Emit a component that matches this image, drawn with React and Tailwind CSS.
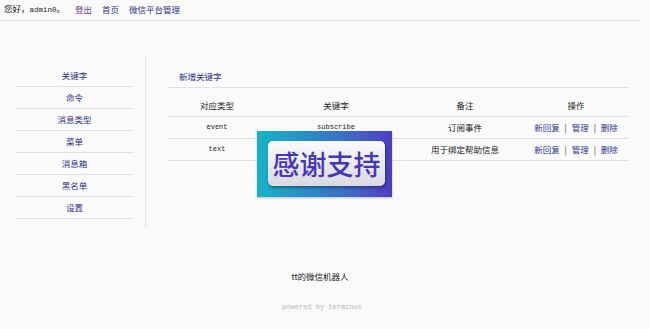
import React from "react";

const menu = ["关键字", "命令", "消息类型", "菜单", "消息箱", "黑名单", "设置"];

const rows = [
  { type: "event", keyword: "subscribe", note: "订阅事件" },
  { type: "text", keyword: "", note: "用于绑定帮助信息" },
];

const cjk = "font-['Noto_Sans_CJK_SC',sans-serif]";
const mono = "font-['Liberation_Mono','Noto_Sans_CJK_SC',monospace]";

const Actions = () => (
  <span className="text-[#2e3590]">
    新回复 <span className="mx-[3px] text-[#333]">|</span> 管理{" "}
    <span className="mx-[3px] text-[#333]">|</span> 删除
  </span>
);

export default function App() {
  return (
    <div className={`relative w-[650px] h-[329px] bg-[#fafafa] text-[#222] ${cjk} overflow-hidden`}>
      {/* top bar */}
      <div className="w-[640px] h-[21px] border-b border-[#e2e2e2] pl-[4px] pt-[2px] flex items-center gap-[10px] text-[8.5px] leading-[12px] pb-[4px]">
        <span>
          您好，<span className={`${mono} text-[7.5px]`}>admin0</span>。
        </span>
        <span className="text-[#6a3a8e]">登出</span>
        <span className="text-[#2e3590]">首页</span>
        <span className="text-[#2e3590]">微信平台管理</span>
      </div>

      {/* main */}
      <div className="flex mt-[36px]">
        <div className="w-[146px] pl-[15px] pr-[11px] pt-[8px] border-r border-[#e4e4e4] h-[171px]">
          {menu.map((m) => (
            <div
              key={m}
              className="h-[22px] border-b border-[#e2e2e2] flex items-center justify-center text-[8.5px] text-[#2a2f8c]"
            >
              {m}
            </div>
          ))}
        </div>

        <div className="pl-[21px] pt-[8px] w-[482px]">
          <div className="h-[23px] border-b border-[#e2e2e2] pl-[12px] flex items-center text-[8.5px] text-[#2a2f8c]">
            新增关键字
          </div>
          <div className="mt-[7px] text-[8.5px]">
            <div className="grid grid-cols-[100px_138px_120px_102px] h-[22px] items-center text-center border-b border-[#e2e2e2]">
              <span>对应类型</span>
              <span>关键字</span>
              <span>备注</span>
              <span>操作</span>
            </div>
            {rows.map((r) => (
              <div
                key={r.type}
                className="grid grid-cols-[100px_138px_120px_102px] h-[22px] items-center text-center border-b border-[#e2e2e2]"
              >
                <span className={`${mono} text-[7px]`}>{r.type}</span>
                <span className={`${mono} text-[7px]`}>{r.keyword}</span>
                <span>{r.note}</span>
                <Actions />
              </div>
            ))}
          </div>
        </div>
      </div>

      {/* footer */}
      <div className="w-[640px] mt-[42px] text-center text-[8.5px] text-[#222]">
        tt的微信机器人
      </div>
      <div className={`w-[644px] mt-[19px] text-center ${mono} text-[7px] text-[#b8b8b8]`}>
        powered by terminus
      </div>

      {/* sticker overlay */}
      <div className="absolute left-[257px] top-[131px] w-[135px] h-[66px] bg-gradient-to-r from-[#17b2c4] via-[#2f7fc6] to-[#4c3cc3] shadow-[0_1px_2px_rgba(0,0,0,0.25)]">
        <div className="absolute left-[11px] top-[10px] w-[117px] h-[45px] rounded-[5px] bg-gradient-to-b from-[#fbfbfd] to-[#d9d9e2] shadow-[1px_2px_3px_rgba(0,0,0,0.35)] flex items-center justify-center">
          <span className="text-[27px] leading-none font-medium text-[#4536bb]">感谢支持</span>
        </div>
      </div>
    </div>
  );
}
